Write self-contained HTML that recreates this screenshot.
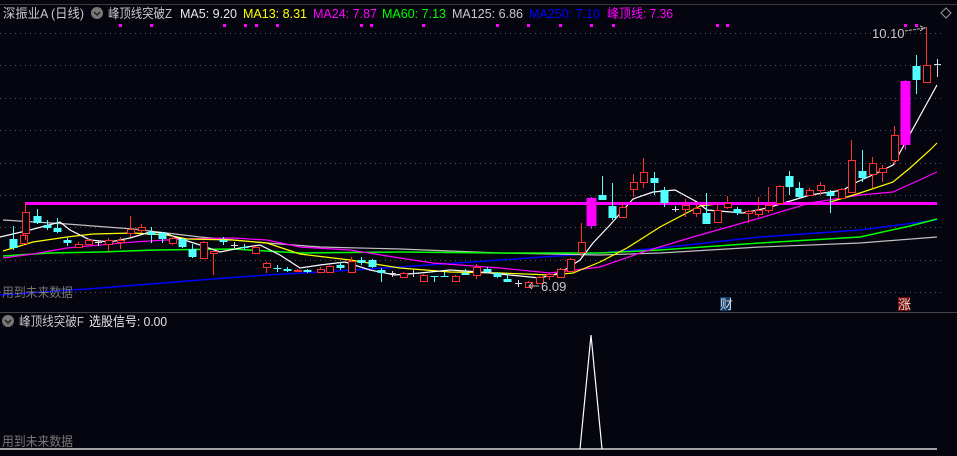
<!DOCTYPE html>
<html><head><meta charset="utf-8"><style>
html,body{margin:0;padding:0;background:#05050f;width:957px;height:456px;overflow:hidden}
svg{display:block}
text{font-family:"Liberation Sans","Noto Sans CJK SC",sans-serif;font-size:13px}
</style></head><body>
<svg id="s" width="957" height="456" xmlns="http://www.w3.org/2000/svg">
<rect width="957" height="456" fill="#05050f"/>
<line x1="0" y1="4.5" x2="957" y2="4.5" stroke="#3a3a3a"/>
<g stroke="#555" stroke-width="1" stroke-dasharray="1,4">
<line x1="0" y1="33.5" x2="945" y2="33.5"/><line x1="0" y1="65.5" x2="945" y2="65.5"/>
<line x1="0" y1="98.5" x2="945" y2="98.5"/><line x1="0" y1="130.5" x2="945" y2="130.5"/>
<line x1="0" y1="163.5" x2="945" y2="163.5"/><line x1="0" y1="195.5" x2="945" y2="195.5"/>
<line x1="0" y1="227.5" x2="945" y2="227.5"/><line x1="0" y1="260.5" x2="945" y2="260.5"/>
<line x1="0" y1="292.5" x2="945" y2="292.5"/>
</g>
<line x1="0" y1="312.5" x2="957" y2="312.5" stroke="#444"/>
<g id="lines" fill="none" stroke-width="1.2">
<polyline stroke="#0000ff" stroke-width="1.5" points="0,295 100,288 200,280 267,275 320,272 400,267 500,260 600,253 660,248 760,237 860,230 937,220"/>
<polyline stroke="#c0c0c0" points="3,220 67,224 133,229 200,237 267,243 320,247 400,249 500,253 600,255 660,253 760,247 860,243 937,237"/>
<polyline stroke="#00ff00" stroke-width="1.5" points="3,256 50,253 100,252 157,250 233,249 300,253 400,252 500,253 600,253 660,250 760,243 860,237 910,226 937,219"/>
<polyline stroke="#ff00ff" points="3,258 33,254 67,248 133,242 183,239 233,238 267,240 300,247 350,250 400,258 433,263 500,268 550,273 600,267 643,252 693,237 760,218 810,203 860,195 893,192 937,172"/>
<polyline stroke="#ffff00" points="3,251 33,242 67,237 93,234 133,233 167,235 187,239 233,240 267,243 300,254 350,260 400,268 450,272 500,273 550,275 573,273 600,262 627,248 660,227 700,206 727,203 827,203 860,193 893,182 910,168 930,150 937,143"/>
<polyline stroke="#ffffff" points="0,237 30,230 60,222 70,230 90,240 110,242 130,238 150,232 165,233 175,237 200,245 220,252 240,248 260,245 280,255 300,268 320,265 345,262 370,270 395,275 420,273 450,270 480,272 510,275 540,278 560,273 580,260 593,243 610,225 633,199 653,192 675,190 697,202 707,210 743,213 767,208 787,202 810,195 843,190 857,182 877,173 893,165 915,125 937,85"/>
</g>
<line x1="25" y1="203.5" x2="937" y2="203.5" stroke="#ff00ff" stroke-width="3"/>
<g id="c"></g>
<g fill="#ff00ff" id="dots"></g>
<text x="3" y="18" fill="#c8c8c8" textLength="81" lengthAdjust="spacingAndGlyphs">深振业A (日线)</text>
<circle cx="97" cy="13" r="6" fill="#777"/><path d="M94 12 l3 3 l3 -3" stroke="#222" stroke-width="1.5" fill="none"/>
<text x="108" y="18" fill="#c8c8c8" textLength="64" lengthAdjust="spacingAndGlyphs">峰顶线突破Z</text>
<text x="180" y="18" fill="#e8e8e8" textLength="57" lengthAdjust="spacingAndGlyphs">MA5: 9.20</text>
<text x="243" y="18" fill="#ffff00" textLength="64" lengthAdjust="spacingAndGlyphs">MA13: 8.31</text>
<text x="313" y="18" fill="#ff00ff" textLength="64" lengthAdjust="spacingAndGlyphs">MA24: 7.87</text>
<text x="382" y="18" fill="#00ff00" textLength="64" lengthAdjust="spacingAndGlyphs">MA60: 7.13</text>
<text x="452" y="18" fill="#c8c8c8" textLength="71" lengthAdjust="spacingAndGlyphs">MA125: 6.86</text>
<text x="529" y="18" fill="#0000ff" textLength="71" lengthAdjust="spacingAndGlyphs">MA250: 7.10</text>
<text x="607" y="18" fill="#ff00ff" textLength="66" lengthAdjust="spacingAndGlyphs">峰顶线: 7.36</text>
<path d="M946 8 l5 5 l-5 5 l-5 -5z" fill="none" stroke="#999"/>
<text x="872" y="38" fill="#c8c8c8">10.10</text>
<path d="M905 31 L925 28 M920 26 L925 28 L920 31" stroke="#bbb" fill="none" stroke-dasharray="3,1"/>
<text x="541" y="291" fill="#c8c8c8">6.09</text>
<path d="M539 286 L529 286 M532 283 L529 286 L532 289" stroke="#bbb" fill="none"/>
<text x="2" y="297" fill="#777" textLength="71" lengthAdjust="spacingAndGlyphs">用到未来数据</text>
<rect x="720" y="297" width="11" height="14" fill="#0d3a6a"/><text x="720" y="309" fill="#ddd" font-size="11">财</text>
<rect x="898" y="297" width="12" height="14" fill="#7a0a0a"/><text x="898" y="309" fill="#ddd" font-size="11">涨</text>
<circle cx="8" cy="321" r="6" fill="#777"/><path d="M5 320 l3 3 l3 -3" stroke="#222" stroke-width="1.5" fill="none"/>
<text x="19" y="326" fill="#c8c8c8" textLength="65" lengthAdjust="spacingAndGlyphs">峰顶线突破F</text>
<text x="89" y="326" fill="#e8e8e8" textLength="78" lengthAdjust="spacingAndGlyphs">选股信号: 0.00</text>
<path d="M580 449 L591 335 L602 449" stroke="#fff" fill="none" stroke-width="1.2"/>
<line x1="0" y1="449" x2="937" y2="449" stroke="#fff" stroke-width="1.2"/>
<text x="2" y="446" fill="#777" textLength="71" lengthAdjust="spacingAndGlyphs">用到未来数据</text>
</svg>
<script>
var C=[[13,239,248,226,250,'c'],[23,235,243,222,245,'r'],[25,212,233,203,240,'r'],[37,216,223,209,224,'c'],[47,225,228,220,230,'c'],[57,228,232,218,233,'c'],[67,240,243,238,246,'c'],[78,244,247,242,248,'r'],[88,240,244,238,245,'r'],[98,242,242,240,246,'w'],[108,240,244,238,251,'r'],[120,240,242,237,249,'r'],[130,229,233,216,237,'r'],[141,227,230,224,233,'r'],[151,232,235,227,243,'c'],[162,233,239,232,243,'c'],[172,238,243,236,245,'r'],[182,239,247,238,248,'c'],[192,249,257,244,258,'c'],[203,242,258,241,258,'r'],[213,251,253,251,275,'r'],[223,240,242,237,245,'c'],[234,245,245,242,248,'w'],[244,247,247,244,250,'c'],[255,247,253,246,254,'r'],[266,263,267,262,273,'r'],[277,268,268,265,272,'c'],[287,269,271,267,272,'c'],[297,270,271,269,272,'r'],[307,270,272,269,273,'c'],[320,269,272,267,273,'r'],[329,266,272,265,273,'r'],[340,265,268,262,270,'c'],[351,261,272,257,273,'r'],[361,260,263,257,265,'c'],[372,260,267,259,268,'c'],[381,270,273,268,282,'c'],[392,273,273,271,277,'w'],[403,273,277,272,278,'r'],[413,273,273,270,277,'w'],[423,275,281,274,282,'r'],[434,276,277,276,282,'c'],[444,276,277,272,277,'c'],[455,276,281,275,282,'r'],[465,273,275,269,275,'c'],[476,267,275,264,279,'r'],[487,269,272,267,273,'c'],[497,273,277,272,278,'c'],[507,279,282,273,282,'c'],[518,283,283,280,287,'w'],[528,282,287,281,288,'r'],[539,277,283,276,284,'r'],[549,274,276,273,280,'r'],[560,269,277,268,278,'r'],[570,259,271,258,272,'r'],[581,242,252,223,257,'r'],[591,198,226,197,229,'m'],[602,195,200,176,200,'c'],[612,206,218,183,220,'c'],[622,207,217,202,218,'r'],[633,182,189,174,197,'r'],[643,172,182,158,188,'r'],[654,178,183,172,195,'c'],[664,190,203,187,207,'c'],[675,209,209,206,212,'w'],[685,205,209,199,217,'r'],[696,208,213,205,217,'r'],[706,213,224,193,224,'c'],[717,210,222,202,222,'r'],[727,203,207,196,209,'r'],[737,209,213,207,215,'c'],[748,211,213,210,223,'r'],[758,210,214,197,217,'r'],[768,205,210,187,213,'r'],[779,186,203,185,204,'r'],[789,176,187,171,195,'c'],[799,188,197,182,198,'c'],[809,190,195,188,196,'r'],[820,185,190,182,195,'r'],[830,192,196,190,213,'c'],[841,189,198,188,199,'r'],[851,160,192,140,193,'r'],[862,171,178,150,182,'c'],[872,163,174,157,188,'r'],[882,168,172,165,182,'r'],[894,135,160,126,165,'r'],[905,81,145,80,150,'m'],[916,66,80,55,94,'c'],[926,65,82,27,82,'r'],[937,64,64,59,77,'w']];
var h='';C.forEach(function(c){var x=c[0],t=c[1],b=c[2],wt=c[3],wb=c[4],k=c[5];
var col={r:'#ff3030',c:'#54ffff',w:'#dddddd',m:'#ff00ff'}[k];
h+='<line x1="'+(x+.5)+'" y1="'+wt+'" x2="'+(x+.5)+'" y2="'+wb+'" stroke="'+col+'"/>';
if(k=='w'){h+='<line x1="'+(x-3)+'" y1="'+(t+.5)+'" x2="'+(x+4)+'" y2="'+(t+.5)+'" stroke="'+col+'"/>';}
else if(k=='r'){h+='<rect x="'+(x-3+.5)+'" y="'+(t+.5)+'" width="7" height="'+Math.max(b-t,1)+'" fill="#05050f" stroke="'+col+'"/>';}
else {var w=k=='m'?10:8;h+='<rect x="'+(x-w/2+.5)+'" y="'+t+'" width="'+w+'" height="'+Math.max(b-t,1)+'" fill="'+col+'"/>';}});
document.getElementById('c').innerHTML=h;
var D=[119,150,223,244,255,276,360,370,422,496,527,559,590,612,716,726,904,915],d='';
D.forEach(function(x){d+='<rect x="'+x+'" y="24" width="3" height="3"/>';});
document.getElementById('dots').innerHTML=d;
</script>
</body></html>
